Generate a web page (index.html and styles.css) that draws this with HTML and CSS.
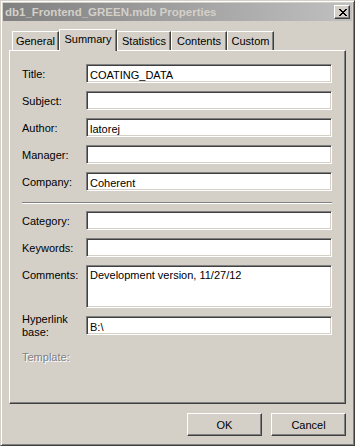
FILE: index.html
```html
<!DOCTYPE html>
<html lang="en">
<head>
    <meta charset="UTF-8">
    <title>db1_Frontend_GREEN.mdb Properties</title>
    <link rel="stylesheet" href="styles.css">
</head>
<body>
    <div class="window">
        <div class="titlebar">
            <span class="title">db1_Frontend_GREEN.mdb Properties</span>
            <button class="close-btn" type="button">
                <svg width="8" height="7" viewBox="0 0 8 7">
                    <path d="M0 0h2v1H0zM6 0h2v1H6zM1 1h2v1H1zM5 1h2v1H5zM2 2h4v1H2zM3 3h2v1H3zM2 4h4v1H2zM1 5h2v1H1zM5 5h2v1H5zM0 6h2v1H0zM6 6h2v1H6z" fill="#000"/>
                </svg>
            </button>
        </div>

        <div class="dialog">
            <div class="tabs">
                <div class="tab">General</div>
                <div class="tab selected">Summary</div>
                <div class="tab">Statistics</div>
                <div class="tab">Contents</div>
                <div class="tab">Custom</div>
            </div>

            <div class="panel">
                <div class="row">
                    <label class="label">Title:</label>
                    <input class="field" type="text" value="COATING_DATA">
                </div>
                <div class="row">
                    <label class="label">Subject:</label>
                    <input class="field" type="text" value="">
                </div>
                <div class="row">
                    <label class="label">Author:</label>
                    <input class="field" type="text" value="latorej">
                </div>
                <div class="row">
                    <label class="label">Manager:</label>
                    <input class="field" type="text" value="">
                </div>
                <div class="row">
                    <label class="label">Company:</label>
                    <input class="field" type="text" value="Coherent">
                </div>

                <div class="separator"></div>

                <div class="row">
                    <label class="label">Category:</label>
                    <input class="field" type="text" value="">
                </div>
                <div class="row">
                    <label class="label">Keywords:</label>
                    <input class="field" type="text" value="">
                </div>
                <div class="row">
                    <label class="label">Comments:</label>
                    <textarea class="field memo">Development version, 11/27/12</textarea>
                </div>
                <div class="row two-line">
                    <label class="label">Hyperlink<br>base:</label>
                    <input class="field" type="text" value="B:\">
                </div>
                <div class="row">
                    <span class="label disabled">Template:</span>
                </div>
            </div>

            <div class="footer">
                <button class="btn" type="button">OK</button>
                <button class="btn" type="button">Cancel</button>
            </div>
        </div>
    </div>
</body>
</html>
```

FILE: styles.css
```css
* {
    box-sizing: border-box;
}

body {
    margin: 0;
    font-family: "Liberation Sans", Arial, sans-serif;
    font-size: 11px;
    color: #000;
    background: #d4d0c8;
}

.window {
    width: 355px;
    height: 446px;
    padding: 2px;
    background: #d4d0c8;
    border: 1px solid;
    border-color: #d4d0c8 #404040 #404040 #d4d0c8;
    box-shadow: inset 1px 1px #fff, inset -1px -1px #808080;
}

/* inactive caption */
.titlebar {
    height: 18px;
    display: flex;
    align-items: center;
    justify-content: space-between;
    padding: 0 2px 0 2px;
    background: linear-gradient(to right, #808080, #c0c0c0);
}

.title {
    font-weight: bold;
    font-size: 11.5px;
    color: #d4d0c8;
    line-height: 13px;
    padding-top: 1px;
}

.close-btn {
    width: 16px;
    height: 14px;
    padding: 0;
    display: flex;
    align-items: center;
    justify-content: center;
    background: #d4d0c8;
    border: 1px solid;
    border-color: #fff #404040 #404040 #fff;
    box-shadow: inset -1px -1px #808080;
}

.close-btn svg {
    display: block;
    margin-left: 1px;
}

.dialog {
    padding: 8px 6px 0 6px;
}

.tabs {
    height: 21px;
    display: flex;
    align-items: flex-end;
    padding-left: 3px;
}

.tab {
    height: 19px;
    padding-top: 3px;
    line-height: 13px;
    text-align: center;
    border-top: 1px solid #fff;
    border-left: 1px solid #fff;
    border-right: 1px solid #404040;
    box-shadow: inset -1px 0 #808080;
}

.tab:nth-child(1) { width: 47px; }
.tab:nth-child(2) { width: 58px; }
.tab:nth-child(3) { width: 54px; }
.tab:nth-child(4) { width: 56px; }
.tab:nth-child(5) { width: 47px; }

.tab.selected {
    height: 22px;
    margin-bottom: -1px;
    padding-top: 3px;
    position: relative;
    z-index: 1;
    background: #d4d0c8;
}

.panel {
    height: 354px;
    padding: 13px 13px 0 12px;
    border: 1px solid;
    border-color: #fff #404040 #404040 #fff;
    box-shadow: inset -1px -1px #808080;
}

.row {
    display: flex;
    align-items: flex-start;
    margin-bottom: 8px;
}

.label {
    width: 64px;
    flex: none;
    padding-top: 4px;
    line-height: 13px;
}

.two-line {
    margin-top: 3px;
}

.two-line .label {
    padding-top: 0;
    margin-top: -3px;
}

.disabled {
    color: #808080;
    text-shadow: 1px 1px 0 #fff;
}

.field {
    flex: 1;
    height: 19px;
    margin: 0;
    padding: 3px 3px 0 3px;
    font: inherit;
    line-height: 13px;
    color: #000;
    background: #fff;
    border: 1px solid;
    border-color: #808080 #fff #fff #808080;
    box-shadow: inset 1px 1px #404040, inset -1px -1px #d4d0c8;
    outline: none;
}

.memo {
    height: 43px;
    resize: none;
    overflow: hidden;
    display: block;
}

.separator {
    height: 2px;
    margin: 11px 0 7px 0;
    border-top: 1px solid #808080;
    border-bottom: 1px solid #fff;
}

.footer {
    display: flex;
    justify-content: flex-end;
    gap: 9px;
    margin-top: 9px;
}

.btn {
    width: 75px;
    height: 23px;
    padding: 0;
    font: inherit;
    color: #000;
    background: #d4d0c8;
    border: 1px solid;
    border-color: #fff #404040 #404040 #fff;
    box-shadow: inset -1px -1px #808080;
}
```
